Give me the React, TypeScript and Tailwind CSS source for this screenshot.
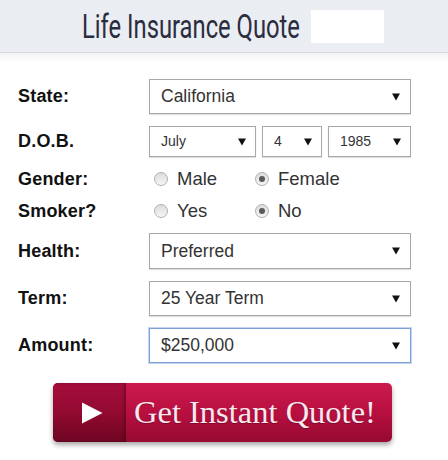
import React from "react";

const Arrow: React.FC<{ size?: number }> = ({ size = 8 }) => (
  <svg width={size} height={size} viewBox="0 0 8 8" className="shrink-0">
    <path d="M0 0.5 L8 0.5 L4 7.5 Z" fill="#111" />
  </svg>
);

const FakeSelect: React.FC<{
  value: string;
  className?: string;
  small?: boolean;
  focused?: boolean;
}> = ({ value, className = "", small, focused }) => (
  <div
    className={`flex items-center justify-between bg-white border ${
      focused ? "border-[#7c9fd8] shadow-[0_0_0_1px_#c3d5f0]" : "border-[#a8a8a8] shadow-[0_1px_1px_rgba(0,0,0,0.12)]"
    } ${small ? "pl-[11px] pr-[9px] text-[14px]" : "pl-[11px] pr-[10px] text-[17.5px]"} text-[#333] ${className}`}
  >
    <span>{value}</span>
    <Arrow size={8} />
  </div>
);

const Radio: React.FC<{ label: string; checked?: boolean }> = ({ label, checked }) => (
  <label className="flex items-center">
    <span className="w-[14px] h-[14px] rounded-full border border-[#b0b0b0] bg-gradient-to-b from-[#dcdcdc] to-[#f6f6f6] flex items-center justify-center ml-[5px]">
      {checked && <span className="w-[6px] h-[6px] rounded-full bg-[#5a5a5a]" />}
    </span>
    <span className="ml-[9px] text-[18.5px] text-[#333]">{label}</span>
  </label>
);

const Label: React.FC<{ children: React.ReactNode }> = ({ children }) => (
  <div className="w-[131px] shrink-0 font-bold text-[18px] tracking-[0.2px] text-[#111]">{children}</div>
);

export default function App() {
  return (
    <div className="w-[448px] h-[460px] bg-white overflow-hidden font-['Liberation_Sans',Arial,sans-serif]">
      {/* Header */}
      <div className="h-[53px] bg-[#eaedf1] border-b border-[#d6dadf] flex items-center pl-[82px]">
        <div className="w-[220px] h-[36px] flex items-center">
          <span className="inline-block origin-left scale-x-[0.72] whitespace-nowrap text-[33px] leading-none text-[#2a2c40] font-['Roboto',sans-serif]">
            Life Insurance Quote
          </span>
        </div>
        <div className="ml-[9px] w-[73px] h-[33px] bg-white" />
      </div>
      <div className="h-[10px] bg-gradient-to-b from-[#f3f4f6] to-white" />

      {/* Form */}
      <div className="pl-[18px] pt-[16px]">
        <div className="flex items-center">
          <Label>State:</Label>
          <FakeSelect value="California" className="w-[262px] h-[35px]" />
        </div>

        <div className="flex items-center mt-[12px]">
          <Label>D.O.B.</Label>
          <div className="flex gap-[6px]">
            <FakeSelect small value="July" className="w-[107px] h-[31px]" />
            <FakeSelect small value="4" className="w-[60px] h-[31px]" />
            <FakeSelect small value="1985" className="w-[83px] h-[31px]" />
          </div>
        </div>

        <div className="flex items-center h-[26px] mt-[9px]">
          <Label>Gender:</Label>
          <div className="w-[101px]">
            <Radio label="Male" />
          </div>
          <Radio label="Female" checked />
        </div>

        <div className="flex items-center h-[26px] mt-[6px]">
          <Label>Smoker?</Label>
          <div className="w-[101px]">
            <Radio label="Yes" />
          </div>
          <Radio label="No" checked />
        </div>

        <div className="flex items-center mt-[9px]">
          <Label>Health:</Label>
          <FakeSelect value="Preferred" className="w-[262px] h-[36px]" />
        </div>

        <div className="flex items-center mt-[12px]">
          <Label>Term:</Label>
          <FakeSelect value="25 Year Term" className="w-[262px] h-[35px]" />
        </div>

        <div className="flex items-center mt-[12px]">
          <Label>Amount:</Label>
          <FakeSelect focused value="$250,000" className="w-[262px] h-[35px]" />
        </div>
      </div>

      {/* Button */}
      <div className="pl-[53px] mt-[20px]">
        <button className="flex w-[339px] h-[59px] rounded-[5px] overflow-hidden bg-gradient-to-b from-[#cc1a4e] via-[#b80f40] to-[#960a32] shadow-[0_3px_5px_rgba(0,0,0,0.35)]">
          <span className="w-[73px] h-full flex items-center justify-center bg-gradient-to-b from-[#a50d3a] via-[#920a31] to-[#6e0522] shadow-[inset_-2px_0_3px_rgba(0,0,0,0.25)]">
            <svg width="22" height="22" viewBox="0 0 22 22" className="ml-[5px]">
              <path d="M1 0.5 L21.5 11 L1 21.5 Z" fill="#fff" />
            </svg>
          </span>
          <span className="ml-[8px] self-center text-[32.5px] leading-none text-[#fbe8ee] font-['Liberation_Serif','Times_New_Roman',serif] whitespace-nowrap [text-shadow:0_1px_1px_rgba(0,0,0,0.3)]">
            Get Instant Quote!
          </span>
        </button>
      </div>
    </div>
  );
}
